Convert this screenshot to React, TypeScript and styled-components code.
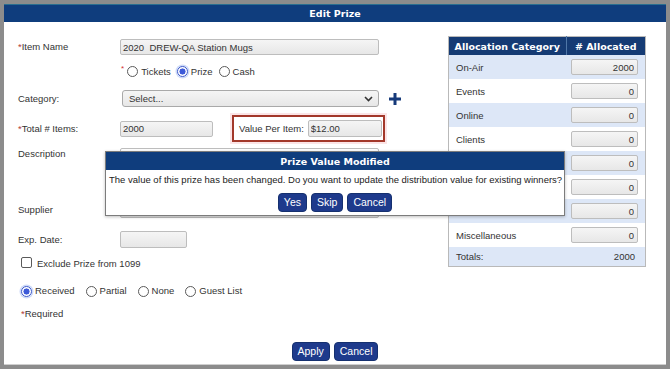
import React from 'react';
import styled, { createGlobalStyle, css } from 'styled-components';

const GlobalStyle = createGlobalStyle`
  html, body {
    margin: 0;
    padding: 0;
    background: #8c8c8c;
  }
  body {
    font-family: "Liberation Sans", Arial, sans-serif;
    font-size: 9.5px;
    color: #333;
  }
`;

const NAVY = '#0f3d7d';
const HEAD_FONT = '"DejaVu Sans", Verdana, sans-serif';

const Frame = styled.div`
  position: relative;
  margin: 4px;
  width: 662px;
  height: 360px;
  background: #fff;
  box-shadow: 0 1px 0 #cfcfcf;
  overflow: hidden;
`;

const TitleBar = styled.div`
  height: 18px;
  background: ${NAVY};
  border-top: 1px solid #2b6f8f;
  box-sizing: border-box;
  color: #fff;
  font: bold 9.5px ${HEAD_FONT};
  display: flex;
  align-items: center;
  justify-content: center;
`;

const Body = styled.div`
  display: flex;
  align-items: flex-start;
  padding: 14px 0 0 14px;
`;

const FormColumn = styled.div`
  width: 430px;
  padding-top: 3px;
  display: flex;
  flex-direction: column;
`;

const Row = styled.div<{ $mt?: number; $h: number; $top?: boolean }>`
  display: grid;
  grid-template-columns: 102px auto;
  align-items: ${({ $top }) => ($top ? 'start' : 'center')};
  margin-top: ${({ $mt }) => $mt ?? 0}px;
  height: ${({ $h }) => $h}px;
`;

const FlatRow = styled.div<{ $mt: number; $h: number }>`
  display: flex;
  align-items: center;
  padding-left: 3px;
  margin-top: ${({ $mt }) => $mt}px;
  height: ${({ $h }) => $h}px;
`;

const Label = styled.span`
  line-height: 12px;
  color: #333;
`;

const Req = styled.span`
  color: #b33a3a;
`;

const SuperReq = styled.span`
  color: #d23030;
  font-size: 8px;
  align-self: flex-start;
  margin: -2px 3px 0 1px;
`;

const fieldBase = css`
  box-sizing: border-box;
  border: 1px solid #bdbdbd;
  border-radius: 2px;
  background: linear-gradient(#f5f5f5, #e7e7e7);
  font-family: "Liberation Sans", Arial, sans-serif;
  font-size: 9.5px;
  color: #333;
  outline: none;
  margin: 0;
`;

const TextField = styled.input<{ $w: number; $h?: number; $right?: boolean }>`
  ${fieldBase}
  width: ${({ $w }) => $w}px;
  height: ${({ $h }) => $h ?? 16}px;
  padding: ${({ $right }) => ($right ? '0 3px 0 0' : '0 0 0 2px')};
  text-align: ${({ $right }) => ($right ? 'right' : 'left')};
`;

const TextArea = styled.textarea`
  ${fieldBase}
  width: 259px;
  height: 49px;
  resize: none;
  background: #fff;
`;

const SelectBox = styled.div`
  ${fieldBase}
  width: 257px;
  height: 17px;
  margin-left: 2px;
  border-color: #a9a9a9;
  border-radius: 3px;
  display: flex;
  align-items: center;
  justify-content: space-between;
  padding: 0 5px 0 6px;
`;

const FieldWithAdd = styled.div`
  display: flex;
  align-items: center;
  gap: 10px;
`;

const RadioGroup = styled.div`
  display: flex;
  align-items: center;
`;

const RadioDot = styled.span<{ $checked?: boolean }>`
  width: 11px;
  height: 11px;
  box-sizing: border-box;
  border-radius: 50%;
  border: 1px solid #5a5a5a;
  background: #fff;
  flex: none;
  ${({ $checked }) =>
    $checked &&
    css`
      border-color: #3a56c9;
      background: radial-gradient(circle, #3d5ad8 0 2.8px, #fff 3.3px);
      box-shadow: 0 0 0 1.5px #cddaf8;
    `}
`;

const RadioText = styled.span<{ $gap: number }>`
  margin-left: 3px;
  margin-right: ${({ $gap }) => $gap}px;
  line-height: 12px;
`;

const CheckBox = styled.span`
  width: 11px;
  height: 11px;
  box-sizing: border-box;
  border: 1px solid #5a5a5a;
  border-radius: 2px;
  background: #fff;
  margin-right: 5px;
  margin-top: -3px;
`;

const ValueRow = styled.div`
  display: flex;
  align-items: center;
`;

const ValueBox = styled.div`
  margin-left: 19px;
  width: 153px;
  height: 27px;
  box-sizing: border-box;
  border: 2px solid #a3382a;
  box-shadow: 0 0 0 2px #fbe4e6;
  display: flex;
  align-items: center;
  padding-left: 5px;
  gap: 4px;
`;

const Footer = styled.div`
  display: flex;
  justify-content: center;
  gap: 4px;
  margin-top: 22px;
`;

const Button = styled.button`
  height: 19px;
  padding: 0 5px;
  background: #1e3a8c;
  border: 1px solid #15306f;
  border-radius: 4px;
  color: #fff;
  font-family: "Liberation Sans", Arial, sans-serif;
  font-size: 10.5px;
  line-height: 17px;
  cursor: pointer;
`;

const AllocTable = styled.table`
  width: 198px;
  border-collapse: collapse;
  border: 1px solid #b9b9b9;
`;

const HeadCell = styled.th<{ $divider?: boolean }>`
  height: 18px;
  padding: 0;
  background: #153b74;
  color: #fff;
  font: bold 9.5px ${HEAD_FONT};
  text-align: center;
  border-left: ${({ $divider }) => ($divider ? '1px solid #4f77a8' : 'none')};
`;

const DataRow = styled.tr<{ $shade?: boolean; $h?: number }>`
  height: ${({ $h }) => $h ?? 24}px;
  background: ${({ $shade }) => ($shade ? '#dde7f7' : '#fff')};
`;

const NameCell = styled.td`
  padding: 0 0 0 7px;
  width: 110px;
  color: #333;
`;

const AmountCell = styled.td`
  padding: 0 7px 0 0;
  text-align: right;
`;

const TotalCell = styled.td`
  padding: 0 10px 0 0;
  text-align: right;
  color: #333;
`;

const Modal = styled.div`
  position: absolute;
  left: 101px;
  top: 147px;
  width: 460px;
  height: 65px;
  box-sizing: border-box;
  border: 1px solid #7c7c7c;
  background: #fff;
  box-shadow: 0 1px 3px rgba(0, 0, 0, 0.25);
`;

const ModalHeader = styled.div`
  height: 18px;
  background: ${NAVY};
  color: #fff;
  font: bold 9.5px ${HEAD_FONT};
  display: flex;
  align-items: center;
  justify-content: center;
`;

const ModalText = styled.div`
  margin: 4px 0 0 3px;
  line-height: 12px;
  color: #222;
`;

const ModalButtons = styled.div`
  display: flex;
  justify-content: center;
  gap: 4px;
  margin-top: 7px;
`;

const PlusIcon = () => (
  <svg width="12" height="12" viewBox="0 0 12 12">
    <rect x="4.5" y="0" width="3" height="12" fill="#163a7a" />
    <rect x="0" y="4.5" width="12" height="3" fill="#163a7a" />
  </svg>
);

const Chevron = () => (
  <svg width="9" height="6" viewBox="0 0 9 6">
    <path d="M1 1 L4.5 4.5 L8 1" stroke="#333" strokeWidth="1.6" fill="none" />
  </svg>
);

const Radio = ({ label, checked, gap }: { label: string; checked?: boolean; gap: number }) => (
  <>
    <RadioDot $checked={checked} />
    <RadioText $gap={gap}>{label}</RadioText>
  </>
);

// rows 5-7 sit under the dialog, their names never show
const allocations = [
  { name: 'On-Air', value: '2000' },
  { name: 'Events', value: '0' },
  { name: 'Online', value: '0' },
  { name: 'Clients', value: '0' },
  { name: '', value: '0' },
  { name: '', value: '0' },
  { name: '', value: '0' },
  { name: 'Miscellaneous', value: '0' },
];

export default function App() {
  return (
    <>
      <GlobalStyle />
      <Frame>
        <TitleBar>Edit Prize</TitleBar>
        <Body>
          <FormColumn>
            <Row $h={16}>
              <Label><Req>*</Req>Item Name</Label>
              <TextField $w={259} readOnly value="2020  DREW-QA Station Mugs" />
            </Row>
            <Row $mt={10} $h={13}>
              <span />
              <RadioGroup>
                <SuperReq>*</SuperReq>
                <Radio label="Tickets" gap={6} />
                <Radio label="Prize" checked gap={6} />
                <Radio label="Cash" gap={6} />
              </RadioGroup>
            </Row>
            <Row $mt={12} $h={17}>
              <Label>Category:</Label>
              <FieldWithAdd>
                <SelectBox>
                  <span>Select...</span>
                  <Chevron />
                </SelectBox>
                <PlusIcon />
              </FieldWithAdd>
            </Row>
            <Row $mt={8} $h={27}>
              <Label><Req>*</Req>Total # Items:</Label>
              <ValueRow>
                <TextField $w={93} readOnly value="2000" />
                <ValueBox>
                  <Label>Value Per Item:</Label>
                  <TextField $w={74} $h={17} readOnly value="$12.00" />
                </ValueBox>
              </ValueRow>
            </Row>
            <Row $mt={6} $h={49} $top>
              <Label>Description</Label>
              <TextArea readOnly />
            </Row>
            <Row $mt={5} $h={16}>
              <Label>Supplier</Label>
              <TextField $w={259} readOnly value="" />
            </Row>
            <Row $mt={13} $h={17}>
              <Label>Exp. Date:</Label>
              <TextField $w={67} $h={17} readOnly value="" />
            </Row>
            <FlatRow $mt={10} $h={12}>
              <CheckBox />
              <Label>Exclude Prize from 1099</Label>
            </FlatRow>
            <FlatRow $mt={15} $h={12}>
              <Radio label="Received" checked gap={11} />
              <Radio label="Partial" gap={11} />
              <Radio label="None" gap={11} />
              <Radio label="Guest List" gap={11} />
            </FlatRow>
            <FlatRow $mt={11} $h={12}>
              <Label><Req>*</Req>Required</Label>
            </FlatRow>
          </FormColumn>
          <AllocTable>
            <thead>
              <tr>
                <HeadCell>Allocation Category</HeadCell>
                <HeadCell $divider># Allocated</HeadCell>
              </tr>
            </thead>
            <tbody>
              {allocations.map((a, i) => (
                <DataRow key={i} $shade={i % 2 === 0}>
                  <NameCell>{a.name}</NameCell>
                  <AmountCell>
                    <TextField $w={67} $right readOnly value={a.value} />
                  </AmountCell>
                </DataRow>
              ))}
              <DataRow $shade $h={19}>
                <NameCell>Totals:</NameCell>
                <TotalCell>2000</TotalCell>
              </DataRow>
            </tbody>
          </AllocTable>
        </Body>
        <Footer>
          <Button>Apply</Button>
          <Button>Cancel</Button>
        </Footer>
        <Modal>
          <ModalHeader>Prize Value Modified</ModalHeader>
          <ModalText>
            The value of this prize has been changed. Do you want to update the distribution value for existing winners?
          </ModalText>
          <ModalButtons>
            <Button>Yes</Button>
            <Button>Skip</Button>
            <Button>Cancel</Button>
          </ModalButtons>
        </Modal>
      </Frame>
    </>
  );
}
